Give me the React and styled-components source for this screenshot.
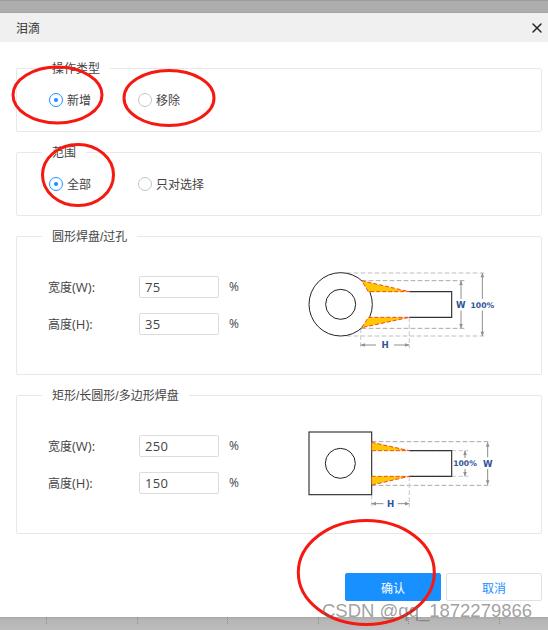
import styled, { createGlobalStyle } from "styled-components";
import { X } from "lucide-react";

const GlobalStyle = createGlobalStyle`
  html, body {
    margin: 0;
    padding: 0;
    background: #fff;
  }
  * {
    box-sizing: border-box;
  }
`;

const Page = styled.div`
  position: relative;
  width: 548px;
  height: 630px;
  overflow: hidden;
  display: flex;
  flex-direction: column;
  font-family: "Noto Sans CJK SC", "Open Sans", sans-serif;
  font-size: 12px;
  color: #444;
`;
const TopBar = styled.div`
  height: 13px;
  background: #adadad;
  border-top: 1px solid #9c9c9c;
  border-bottom: 1px solid #a6a6a6;
`;
const Header = styled.div`
  height: 29px;
  padding: 0 3px 0 16px;
  background: #f0f0f0;
  display: flex;
  align-items: center;
  justify-content: space-between;
  color: #333;
`;
const Body = styled.div`
  flex: 1;
  background: #fff;
  padding: 16px 6px 0 16px;
  display: flex;
  flex-direction: column;
  gap: 10px;
`;
const Group = styled.fieldset`
  margin: 0;
  padding: 0;
  height: ${(p) => p.$height}px;
  border: 1px solid #e8e8e8;
  border-radius: 2px;
  min-width: 0;
`;
const Legend = styled.legend`
  margin-left: 25px;
  padding: 2px 10px 0;
  font-family: "Liberation Sans", "Noto Sans CJK SC", sans-serif;
  line-height: 18px;
  color: #444;
`;
const RadioRow = styled.div`
  height: 43px;
  padding-left: 32px;
  display: flex;
  align-items: center;
`;
const RadioItem = styled.label`
  width: 89px;
  display: flex;
  align-items: center;
  gap: 4px;
`;
const RadioMark = styled.span`
  width: 14px;
  height: 14px;
  border-radius: 50%;
  border: 1px solid ${(p) => (p.$on ? "#1890ff" : "#c4c4c4")};
  display: flex;
  align-items: center;
  justify-content: center;
  &::after {
    content: "";
    width: 4px;
    height: 4px;
    border-radius: 50%;
    background: ${(p) => (p.$on ? "#1890ff" : "transparent")};
  }
`;
const SizeRow = styled.div`
  display: flex;
  align-items: flex-start;
`;
const Fields = styled.div`
  width: 273px;
  padding: 30px 0 0 31px;
  display: flex;
  flex-direction: column;
  gap: 15px;
`;
const Field = styled.div`
  display: flex;
  align-items: center;
  height: 22px;
`;
const FieldLabel = styled.span`
  width: 91px;
`;
const LabelAxis = styled.span`
  font-family: "Open Sans", sans-serif;
  font-size: 13px;
`;
const ValueBox = styled.div`
  width: 80px;
  height: 22px;
  padding-left: 5px;
  border: 1px solid #dcdcdc;
  border-radius: 2px;
  font-family: "Open Sans", sans-serif;
  font-size: 13px;
  line-height: 20px;
  color: #444;
  letter-spacing: 0.3px;
`;
const Unit = styled.span`
  margin: -2px 0 0 10px;
  font-family: "Open Sans", sans-serif;
  font-size: 12px;
`;
const Diagram = styled.svg`
  display: block;
  flex: none;
  margin-top: ${(p) => p.$top}px;
  font-family: "DejaVu Sans", sans-serif;
  font-weight: 700;
`;
const Footer = styled.div`
  margin-top: 29px;
  display: flex;
  justify-content: flex-end;
  gap: 5px;
`;
const Button = styled.button`
  width: 96px;
  height: 28px;
  padding: 0;
  border: 1px solid ${(p) => (p.$primary ? "#1890ff" : "#e0e0e0")};
  border-radius: 2px;
  background: ${(p) => (p.$primary ? "#1890ff" : "#fff")};
  color: ${(p) => (p.$primary ? "#fff" : "#1890ff")};
  font-family: inherit;
  font-size: 12px;
`;
const BottomBar = styled.div`
  height: 13px;
  display: grid;
  grid-template-columns: 47px repeat(5, 90.5px) 1fr;
  background: linear-gradient(#a9a9a9, #b6b6b6 3px, #bcbcbc);
`;
const BottomCell = styled.div`
  border-right: 1px dotted #8c8c8c;
  height: 7px;
`;
const Marks = styled.svg`
  position: absolute;
  inset: 0;
  pointer-events: none;
`;
const Watermark = styled.div`
  position: absolute;
  left: 322px;
  top: 600px;
  font-family: "Liberation Sans", sans-serif;
  font-size: 18.5px;
  line-height: 21px;
  color: rgba(100, 100, 100, 0.62);
  white-space: nowrap;
`;

const Radio = ({ on, children }) => (
  <RadioItem>
    <RadioMark $on={on} />
    {children}
  </RadioItem>
);

const SizeField = ({ label, axis, value }) => (
  <Field>
    <FieldLabel>
      {label}
      <LabelAxis>{axis}</LabelAxis>
    </FieldLabel>
    <ValueBox>{value}</ValueBox>
    <Unit>%</Unit>
  </Field>
);

const Arrow = ({ x1, y1, x2, y2, w = 3 }) => {
  // arrow head sits on the x2,y2 end
  const a = Math.atan2(y2 - y1, x2 - x1);
  const s = 14;
  const p = (d) => `${x2 - s * Math.cos(a + d)},${y2 - s * Math.sin(a + d)}`;
  return (
    <g>
      <line x1={x1} y1={y1} x2={x2} y2={y2} stroke="#8f8f8f" strokeWidth={w} />
      <polygon points={`${x2},${y2} ${p(0.4)} ${p(-0.4)}`} fill="#8f8f8f" />
    </g>
  );
};

const Dash = ({ x1, y1, x2, y2, light }) => (
  <line
    x1={x1}
    y1={y1}
    x2={x2}
    y2={y2}
    stroke={light ? "#d4d4d4" : "#a8a8a8"}
    strokeWidth={light ? 4 : 3}
    strokeDasharray="14 7"
  />
);

const Wedge = ({ points }) => (
  <polygon
    points={points}
    fill="#ffc800"
    stroke="#f0462a"
    strokeWidth="3"
    strokeDasharray="12 6"
  />
);

const Label = ({ x, y, size = 26, children }) => (
  <text x={x} y={y} fontSize={size} textAnchor="middle" fill="#2f5597">
    {children}
  </text>
);

const RoundPad = () => (
  <Diagram $top={3} width="230" height="110" viewBox="0 0 690 330">
    <Dash x1={170} y1={72} x2={585} y2={72} light />
    <Dash x1={170} y1={261} x2={585} y2={261} light />
    <Dash x1={215} y1={95} x2={525} y2={95} />
    <Dash x1={215} y1={238} x2={525} y2={238} />
    <Dash x1={212} y1={238} x2={212} y2={298} light />
    <Dash x1={358} y1={205} x2={358} y2={298} light />
    <circle cx="152" cy="166" r="95" fill="#fff" stroke="#222" strokeWidth="3" />
    <circle cx="152" cy="166" r="45" fill="#fff" stroke="#222" strokeWidth="3" />
    <path d="M358 128H485V205H358" fill="none" stroke="#333" strokeWidth="3.5" />
    <Wedge points="215,95 358,128 235,128" />
    <Wedge points="235,205 358,205 215,236" />
    <Arrow x1={513} y1={150} x2={513} y2={95} />
    <Arrow x1={513} y1={185} x2={513} y2={238} />
    <Arrow x1={577} y1={150} x2={577} y2={72} />
    <Arrow x1={577} y1={185} x2={577} y2={261} />
    <Arrow x1={258} y1={288} x2={212} y2={288} />
    <Arrow x1={312} y1={288} x2={358} y2={288} />
    <Label x={512} y={176}>W</Label>
    <Label x={577} y={176} size={23}>100%</Label>
    <Label x={285} y={297}>H</Label>
  </Diagram>
);

const RectPad = () => (
  <Diagram $top={9} width="230" height="110" viewBox="0 0 690 330">
    <Dash x1={245} y1={83} x2={603} y2={83} />
    <Dash x1={245} y1={214} x2={603} y2={214} />
    <Dash x1={358} y1={110} x2={535} y2={110} light />
    <Dash x1={358} y1={187} x2={535} y2={187} light />
    <Dash x1={245} y1={242} x2={245} y2={280} light />
    <Dash x1={358} y1={187} x2={358} y2={280} light />
    <rect x="57" y="54" width="188" height="188" fill="#fff" stroke="#333" strokeWidth="3.5" />
    <circle cx="151" cy="148" r="45" fill="#fff" stroke="#222" strokeWidth="3" />
    <path d="M358 110H485V187H358" fill="none" stroke="#333" strokeWidth="3.5" />
    <Wedge points="245,85 358,110 245,110" />
    <Wedge points="245,187 358,187 245,213" />
    <Arrow x1={525} y1={132} x2={525} y2={110} />
    <Arrow x1={525} y1={165} x2={525} y2={187} />
    <Arrow x1={593} y1={130} x2={593} y2={85} />
    <Arrow x1={593} y1={165} x2={593} y2={212} />
    <Arrow x1={280} y1={269} x2={245} y2={269} />
    <Arrow x1={323} y1={269} x2={358} y2={269} />
    <Label x={525} y={157} size={23}>100%</Label>
    <Label x={593} y={158}>W</Label>
    <Label x={302} y={279}>H</Label>
  </Diagram>
);

export default function App() {
  return (
    <>
      <GlobalStyle />
      <Page>
        <TopBar />
        <Header>
          <span>泪滴</span>
          <X size={16} color="#222" strokeWidth={2.2} />
        </Header>
        <Body>
          <Group $height={74}>
            <Legend>操作类型</Legend>
            <RadioRow>
              <Radio on>新增</Radio>
              <Radio>移除</Radio>
            </RadioRow>
          </Group>
          <Group $height={74}>
            <Legend>范围</Legend>
            <RadioRow>
              <Radio on>全部</Radio>
              <Radio>只对选择</Radio>
            </RadioRow>
          </Group>
          <Group $height={149}>
            <Legend>圆形焊盘/过孔</Legend>
            <SizeRow>
              <Fields>
                <SizeField label="宽度" axis="(W):" value="75" />
                <SizeField label="高度" axis="(H):" value="35" />
              </Fields>
              <RoundPad />
            </SizeRow>
          </Group>
          <Group $height={149}>
            <Legend>矩形/长圆形/多边形焊盘</Legend>
            <SizeRow>
              <Fields>
                <SizeField label="宽度" axis="(W):" value="250" />
                <SizeField label="高度" axis="(H):" value="150" />
              </Fields>
              <RectPad />
            </SizeRow>
          </Group>
          <Footer>
            <Button $primary>确认</Button>
            <Button>取消</Button>
          </Footer>
        </Body>
        <BottomBar>
          {[0, 1, 2, 3, 4, 5].map((i) => (
            <BottomCell key={i} />
          ))}
        </BottomBar>
        <Marks width="548" height="630" viewBox="0 0 548 630" fill="none" stroke="#f5190f" strokeWidth="3">
          <ellipse cx="57.5" cy="95" rx="44.5" ry="28" />
          <ellipse cx="169" cy="98" rx="45" ry="27.5" />
          <ellipse cx="78" cy="175" rx="35.5" ry="30.5" />
          <ellipse cx="366.3" cy="572.5" rx="68" ry="52" />
        </Marks>
        <Watermark>CSDN @qq_1872279866</Watermark>
      </Page>
    </>
  );
}
